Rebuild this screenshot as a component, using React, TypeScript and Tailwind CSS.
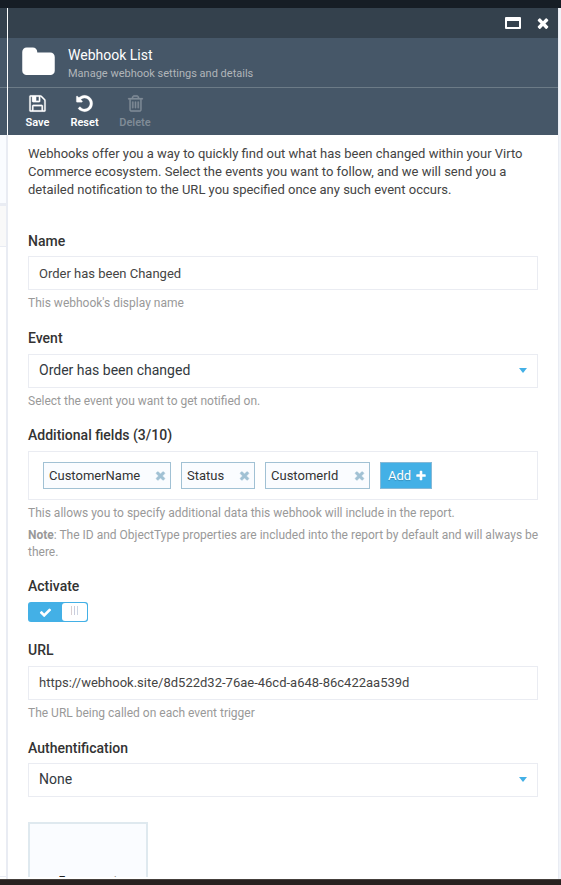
import React from 'react';

const PATHS = {
  times:
    'M1490 1322q0 40-28 68l-136 136q-28 28-68 28t-68-28l-294-294-294 294q-28 28-68 28t-68-28l-136-136q-28-28-28-68t28-68l294-294-294-294q-28-28-28-68t28-68l136-136q28-28 68-28t68 28l294 294 294-294q28-28 68-28t68 28l136 136q28 28 28 68t-28 68l-294 294 294 294q28 28 28 68z',
  check:
    'M1671 566q0 40-28 68l-724 724-136 136q-28 28-68 28t-68-28l-136-136-362-362q-28-28-28-68t28-68l136-136q28-28 68-28t68 28l294 295 656-657q28-28 68-28t68 28l136 136q28 28 28 68z',
  plus:
    'M1600 736v192q0 40-28 68t-68 28h-416v416q0 40-28 68t-68 28h-192q-40 0-68-28t-28-68v-416h-416q-40 0-68-28t-28-68v-192q0-40 28-68t68-28h416v-416q0-40 28-68t68-28h192q40 0 68 28t28 68v416h416q40 0 68 28t28 68z',
  folder:
    'M1728 608v704q0 92-66 158t-158 66h-1216q-92 0-158-66t-66-158v-960q0-92 66-158t158-66h320q92 0 158 66t66 158v32h672q92 0 158 66t66 158z',
  save:
    'M512 1536h768v-384h-768v384zm896 0h128v-896q0-14-10-38.5t-20-34.5l-281-281q-10-10-34-20t-39-10v416q0 40-28 68t-68 28h-576q-40 0-68-28t-28-68v-416h-128v1280h128v-416q0-40 28-68t68-28h832q40 0 68 28t28 68v416zm-384-928v-320q0-13-9.5-22.5t-22.5-9.5h-192q-13 0-22.5 9.5t-9.5 22.5v320q0 13 9.5 22.5t22.5 9.5h192q13 0 22.5-9.5t9.5-22.5zm640 32v928q0 40-28 68t-68 28h-1344q-40 0-68-28t-28-68v-1344q0-40 28-68t68-28h928q40 0 88 20t76 48l280 280q28 28 48 76t20 88z',
  undo:
    'M1664 896q0 156-61 298t-164 245-245 164-298 61q-172 0-327-72.5t-264-204.5q-7-10-6.5-22.5t8.5-20.5l137-138q10-9 25-9 16 2 23 12 73 95 179 147t225 52q104 0 198.5-40.5t163.5-109.5 109.5-163.5 40.5-198.5-40.5-198.5-109.5-163.5-163.5-109.5-198.5-40.5q-98 0-188 35.5t-160 101.5l137 138q31 30 14 69-17 40-59 40h-448q-26 0-45-19t-19-45v-448q0-42 40-59 39-17 69 14l130 129q107-101 244.5-156.5t284.5-55.5q156 0 298 61t245 164 164 245 61 298z',
  trash:
    'M704 736v576q0 14-9 23t-23 9h-64q-14 0-23-9t-9-23v-576q0-14 9-23t23-9h64q14 0 23 9t9 23zm256 0v576q0 14-9 23t-23 9h-64q-14 0-23-9t-9-23v-576q0-14 9-23t23-9h64q14 0 23 9t9 23zm256 0v576q0 14-9 23t-23 9h-64q-14 0-23-9t-9-23v-576q0-14 9-23t23-9h64q14 0 23 9t9 23zm128 724v-948h-896v948q0 22 7 40.5t14.5 27 10.5 8.5h832q3 0 10.5-8.5t14.5-27 7-40.5zm-672-1076h448l-48-117q-7-9-17-11h-317q-10 2-17 11zm928 32v64q0 14-9 23t-23 9h-96v948q0 83-47 143.5t-113 60.5h-832q-66 0-113-58.5t-47-141.5v-952h-96q-14 0-23-9t-9-23v-64q0-14 9-23t23-9h309l70-167q15-37 54-63t79-26h320q40 0 79 26t54 63l70 167h309q14 0 23 9t9 23z',
};

function Icon({ name, className }: { name: keyof typeof PATHS; className: string }) {
  return (
    <svg viewBox="0 0 1792 1792" fill="currentColor" className={`shrink-0 ${className}`}>
      <path d={PATHS[name]} />
    </svg>
  );
}

function Tool({ icon, label, className }: { icon: keyof typeof PATHS; label: string; className: string }) {
  return (
    <button className={`flex flex-col items-center ${className}`}>
      <Icon name={icon} className="size-[19px] stroke-current [stroke-width:25]" />
      <span className="mt-[1.5px] text-[11px] font-semibold leading-[16px]">{label}</span>
    </button>
  );
}

function Label({ children }: { children: React.ReactNode }) {
  return <div className="h-[25px] text-[14px] font-medium leading-[20px] text-[#333]">{children}</div>;
}

function Hint({ children }: { children: React.ReactNode }) {
  return <p className="pt-[5px] text-[12px] leading-[17px] text-[#999]">{children}</p>;
}

function Input({ value, className }: { value: string; className: string }) {
  return (
    <div className={`h-[34px] border border-[#eaecf2] px-[10px] text-[13px] text-[#444] ${className}`}>{value}</div>
  );
}

function Select({ value }: { value: string }) {
  return (
    <div className="flex h-[34px] items-start justify-between border border-[#eaecf2] px-[10px] text-[14px] text-[#333940]">
      <span className="leading-[30px]">{value}</span>
      <svg viewBox="0 0 8 5" className="mt-[13px] h-[5px] w-[8px] fill-[#43b0e6]">
        <path d="M0 0h8L4 5z" />
      </svg>
    </div>
  );
}

function Tag({ name, className }: { name: string; className: string }) {
  return (
    <div
      className={`flex h-[27px] items-center justify-between border border-[#a1c1d4] bg-[#fafcff] pl-[5px] pr-[3.5px] text-[13px] text-[#333] ${className}`}
    >
      <span>{name}</span>
      <Icon name="times" className="size-[13px] stroke-current text-[#a1c1d4] [stroke-width:60]" />
    </div>
  );
}

export default function App() {
  return (
    <div className="flex h-[885px] w-[561px] flex-col overflow-hidden bg-white font-[Roboto,sans-serif]">
      <div className="h-[8px] shrink-0 bg-[#161d25]" />
      <div className="flex h-[871px] shrink-0">
        {/* Edge of the blade underneath */}
        <div className="flex w-[7px] shrink-0 flex-col">
          <div className="h-[30px] bg-[#34414d]" />
          <div className="h-[49px] bg-[#465768]" />
          <div className="h-px bg-[#6c7b87]" />
          <div className="h-[47px] bg-[#465768]" />
          <div className="flex-1 border-r border-[#e9ecf3]">
            <div className="h-[68px] bg-[#fafcff]" />
            <div className="h-[3px] bg-[#e9ecf3]" />
            <div className="h-[41px] border-b border-[#e9ecf3] bg-[#f9f9f9]" />
            <div className="h-[630px] border-b border-[#e9ecf3]" />
          </div>
        </div>
        <div className="flex w-px shrink-0 flex-col">
          <div className="h-[127px] bg-white" />
          <div className="flex-1 bg-[#e9ecf3]" />
        </div>

        <section className="flex w-[550px] shrink-0 flex-col">
          <div className="flex h-[30px] items-center justify-end gap-[14.5px] bg-[#34414d] pr-[7px] text-white">
            <div className="h-[12px] w-[15.5px] rounded-[1px] border-2 border-t-4 border-white" />
            <Icon name="times" className="size-[16px]" />
          </div>
          <header className="flex h-[50px] items-start border-b border-[#6c7b87] bg-[#465768] pl-[13px]">
            <Icon name="folder" className="mt-[7px] size-[35px] text-white" />
            <div className="ml-[12px] pt-[8px]">
              <h1 className="text-[14px] leading-[18px] text-white">Webhook List</h1>
              <p className="pt-px text-[11px] leading-[18px] text-[#b1b5b9]">Manage webhook settings and details</p>
            </div>
          </header>
          <div className="flex h-[47px] bg-[#465768] pl-[10px] pt-[6px]">
            <Tool icon="save" label="Save" className="w-[39px] text-white" />
            <Tool icon="undo" label="Reset" className="ml-[8px] w-[39px] text-white" />
            <Tool icon="trash" label="Delete" className="ml-[10px] w-[42px] text-[#7f8b96]" />
          </div>

          <main className="flex h-[742px] flex-col overflow-hidden px-[20px] pt-[10px]">
            <p className="h-[86px] w-[510px] shrink-0 text-[13px] leading-[18px] text-[#444]">
              Webhooks offer you a way to quickly find out what has been changed within your Virto
              <br />
              Commerce ecosystem. Select the events you want to follow, and we will send you a
              <br />
              detailed notification to the URL you specified once any such event occurs.
            </p>

            <div className="h-[97px] shrink-0">
              <Label>Name</Label>
              <Input value="Order has been Changed" className="leading-[33px]" />
              <Hint>This webhook's display name</Hint>
            </div>

            <div className="h-[97px] shrink-0">
              <div className="h-[26px]">
                <Label>Event</Label>
              </div>
              <Select value="Order has been changed" />
              <Hint>Select the event you want to get notified on.</Hint>
            </div>

            <div className="h-[151px] shrink-0">
              <div className="h-[26px]">
                <Label>Additional fields (3/10)</Label>
              </div>
              <div className="flex h-[49px] gap-[10px] border border-[#eaecf2] pl-[14px] pt-[10px]">
                <Tag name="CustomerName" className="w-[128px]" />
                <Tag name="Status" className="w-[74px]" />
                <Tag name="CustomerId" className="w-[105px]" />
                <button className="flex h-[27px] w-[52px] items-center justify-between border border-[#86b9d7] bg-[#43b0e6] pl-[7px] pr-[4px] text-[13px] text-white [text-shadow:0_1px_1px_rgba(0,0,0,0.2)]">
                  <span>Add</span>
                  <Icon name="plus" className="size-[12px]" />
                </button>
              </div>
              <Hint>This allows you to specify additional data this webhook will include in the report.</Hint>
              <p className="whitespace-nowrap pt-[5px] text-[12px] leading-[17px] text-[#999]">
                <b className="font-bold">Note</b>: The ID and ObjectType properties are included into the report by default and will always be
                <br />
                there.
              </p>
            </div>

            <div className="h-[64px] shrink-0">
              <div className="h-[26px]">
                <Label>Activate</Label>
              </div>
              <div className="flex h-[20px] w-[60px] items-center rounded-[3px] bg-[#43b0e6] p-px">
                <div className="flex w-[33px] justify-center text-white">
                  <Icon name="check" className="size-[13px]" />
                </div>
                <div className="flex h-[18px] w-[25px] items-start justify-center gap-[2px] rounded-[3px] bg-white pt-[3px]">
                  <i className="h-[9px] w-px bg-[#d9cfd2]" />
                  <i className="h-[9px] w-px bg-[#c9cddd]" />
                  <i className="h-[9px] w-px bg-[#ccd4e2]" />
                </div>
              </div>
            </div>

            <div className="h-[98px] shrink-0">
              <div className="h-[26px]">
                <Label>URL</Label>
              </div>
              <Input value="https://webhook.site/8d522d32-76ae-46cd-a648-86c422aa539d" className="leading-[32px]" />
              <Hint>The URL being called on each event trigger</Hint>
            </div>

            <div className="h-[84px] shrink-0">
              <Label>Authentification</Label>
              <Select value="None" />
            </div>

            <div className="h-[120px] w-[120px] shrink-0 border-2 border-[#dfe9ef] bg-[#fafcff] pt-[49px] text-center text-[12px] leading-[16px] text-[#222]">
              Error count
            </div>
          </main>
          <div className="h-[2px] bg-white" />
        </section>

        <div className="flex-1">
          <div className="h-full border-l border-[#e9ecf3] bg-[#f1f4f9]" />
        </div>
      </div>
      <div className="h-[6px] shrink-0 border-t border-[#45403c] bg-[#282220]" />
    </div>
  );
}
